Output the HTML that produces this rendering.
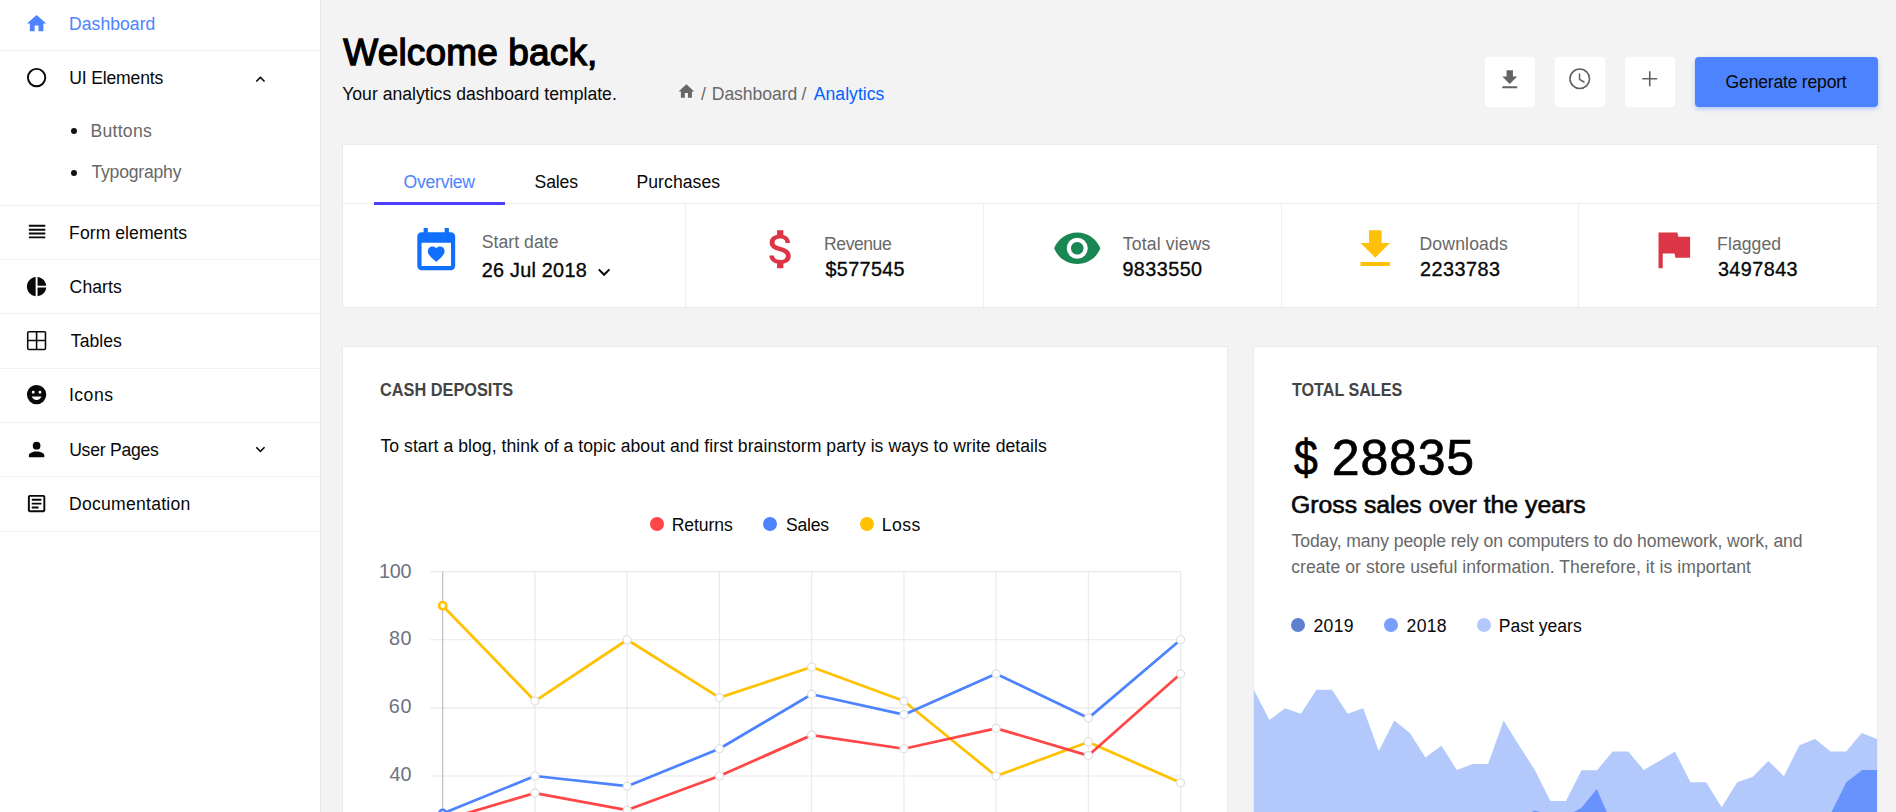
<!DOCTYPE html>
<html><head><meta charset="utf-8"><title>Dashboard</title>
<style>
html,body{margin:0;padding:0;}
body{width:1896px;height:812px;overflow:hidden;background:#f3f3f3;position:relative;font-family:"Liberation Sans",sans-serif;}
.t{position:absolute;white-space:nowrap;line-height:1;}
.i{position:absolute;display:block;overflow:hidden;}
.b{position:absolute;}
</style></head><body>
<div class="b" style="left:0px;top:0px;width:320px;height:812px;background:#fff;"></div>
<div class="b" style="left:320px;top:0px;width:1px;height:812px;background:#e5e5e5;"></div>
<div class="b" style="left:0px;top:50px;width:320px;height:1px;background:#f2f2f2;"></div>
<div class="b" style="left:0px;top:205px;width:320px;height:1px;background:#f2f2f2;"></div>
<div class="b" style="left:0px;top:259px;width:320px;height:1px;background:#f2f2f2;"></div>
<div class="b" style="left:0px;top:313px;width:320px;height:1px;background:#f2f2f2;"></div>
<div class="b" style="left:0px;top:368px;width:320px;height:1px;background:#f2f2f2;"></div>
<div class="b" style="left:0px;top:422px;width:320px;height:1px;background:#f2f2f2;"></div>
<div class="b" style="left:0px;top:476px;width:320px;height:1px;background:#f2f2f2;"></div>
<div class="b" style="left:0px;top:531px;width:320px;height:1px;background:#f2f2f2;"></div>
<div class="t" style="left:69.09px;top:16.07px;font-size:17.6px;color:#4d83ff;letter-spacing:0.023px;">Dashboard</div>
<svg class="i" style="left:25.00px;top:11.80px;width:23.2px;height:23.2px" viewBox="0 0 24 24"><path fill="#4d83ff" d="M10,20V14H14V20H19V12H22L12,3L2,12H5V20H10Z"/></svg>
<div class="t" style="left:69.18px;top:70.07px;font-size:17.6px;color:#080808;letter-spacing:-0.170px;">UI Elements</div>
<svg class="i" style="left:25.00px;top:65.80px;width:23.2px;height:23.2px" viewBox="0 0 24 24"><path fill="#080808" d="M12,20A8,8 0 0,1 4,12A8,8 0 0,1 12,4A8,8 0 0,1 20,12A8,8 0 0,1 12,20M12,2A10,10 0 0,0 2,12A10,10 0 0,0 12,22A10,10 0 0,0 22,12A10,10 0 0,0 12,2Z"/></svg>
<div class="t" style="left:69.09px;top:225.07px;font-size:17.6px;color:#080808;letter-spacing:0.053px;">Form elements</div>
<svg class="i" style="left:25.00px;top:219.90px;width:23.2px;height:23.2px" viewBox="0 0 24 24"><path fill="#080808" d="M4,5V7H21V5M4,11H21V9H4M4,19H21V17H4M4,15H21V13H4V15Z"/></svg>
<div class="t" style="left:69.62px;top:279.07px;font-size:17.6px;color:#080808;letter-spacing:0.073px;">Charts</div>
<svg class="i" style="left:25.00px;top:274.80px;width:23.2px;height:23.2px" viewBox="0 0 24 24"><path fill="#080808" d="M11,2V22C5.9,21.5 2,17.2 2,12C2,6.8 5.9,2.5 11,2M13,2V11H22C21.5,6.2 17.8,2.5 13,2M13,13V22C17.7,21.5 21.5,17.8 22,13H13Z"/></svg>
<div class="t" style="left:70.85px;top:333.07px;font-size:17.6px;color:#080808;letter-spacing:0.021px;">Tables</div>
<svg class="i" style="left:25.00px;top:328.80px;width:23.2px;height:23.2px" viewBox="0 0 24 24"><path fill="#080808" d="M4,2H20A2,2 0 0,1 22,4V20A2,2 0 0,1 20,22H4C2.92,22 2,21.1 2,20V4A2,2 0 0,1 4,2M3.6,3.6V11.2H11.2V3.6H3.6M3.6,20.4H11.2V12.8H3.6V20.4M20.4,20.4V12.8H12.8V20.4H20.4M20.4,3.6H12.8V11.2H20.4V3.6Z"/></svg>
<div class="t" style="left:68.92px;top:387.07px;font-size:17.6px;color:#080808;letter-spacing:0.509px;">Icons</div>
<svg class="i" style="left:25.00px;top:382.80px;width:23.2px;height:23.2px" viewBox="0 0 24 24"><path fill="#080808" d="M12,2C6.47,2 2,6.5 2,12A10,10 0 0,0 12,22A10,10 0 0,0 22,12A10,10 0 0,0 12,2M15.5,8A1.5,1.5 0 0,1 17,9.5A1.5,1.5 0 0,1 15.5,11A1.5,1.5 0 0,1 14,9.5A1.5,1.5 0 0,1 15.5,8M8.5,8A1.5,1.5 0 0,1 10,9.5A1.5,1.5 0 0,1 8.5,11A1.5,1.5 0 0,1 7,9.5A1.5,1.5 0 0,1 8.5,8M12,17.5C9.67,17.5 7.69,16.04 6.89,14H17.11C16.3,16.04 14.33,17.5 12,17.5Z"/></svg>
<div class="t" style="left:69.18px;top:442.07px;font-size:17.6px;color:#080808;letter-spacing:-0.258px;">User Pages</div>
<svg class="i" style="left:25.00px;top:437.80px;width:23.2px;height:23.2px" viewBox="0 0 24 24"><path fill="#080808" d="M12,4A4,4 0 0,1 16,8A4,4 0 0,1 12,12A4,4 0 0,1 8,8A4,4 0 0,1 12,4M12,14C16.42,14 20,15.79 20,18V20H4V18C4,15.79 7.58,14 12,14Z"/></svg>
<div class="t" style="left:69.09px;top:496.07px;font-size:17.6px;color:#080808;letter-spacing:0.241px;">Documentation</div>
<svg class="i" style="left:25.00px;top:491.80px;width:23.2px;height:23.2px" viewBox="0 0 24 24"><path fill="#080808" d="M5,3C3.89,3 3,3.89 3,5V19C3,20.11 3.89,21 5,21H19C20.11,21 21,20.11 21,19V5C21,3.89 20.11,3 19,3H5M5,5H19V19H5V5M7,7V9H17V7H7M7,11V13H17V11H7M7,15V17H14V15H7Z"/></svg>
<div class="t" style="left:90.39px;top:123.07px;font-size:17.6px;color:#686868;letter-spacing:0.293px;">Buttons</div>
<div class="t" style="left:91.45px;top:164.07px;font-size:17.6px;color:#686868;letter-spacing:-0.212px;">Typography</div>
<div class="b" style="left:70.6px;top:128.0px;width:6.4px;height:6.4px;background:#111;border-radius:50%;"></div>
<div class="b" style="left:70.6px;top:169.6px;width:6.4px;height:6.4px;background:#111;border-radius:50%;"></div>
<svg class="i" style="left:250.95px;top:70.00px;width:18.8px;height:18.8px" viewBox="0 0 24 24"><path fill="#080808" d="M7.41,15.41L12,10.83L16.59,15.41L18,14L12,8L6,14L7.41,15.41Z"/></svg>
<svg class="i" style="left:250.95px;top:439.70px;width:18.8px;height:18.8px" viewBox="0 0 24 24"><path fill="#080808" d="M7.41,8.58L12,13.17L16.59,8.58L18,10L12,16L6,10L7.41,8.58Z"/></svg>
<div class="t" style="left:343.36px;top:34.06px;font-size:37px;color:#000;letter-spacing:0.148px;-webkit-text-stroke:1.3px #000;">Welcome back,</div>
<div class="t" style="left:342.16px;top:86.07px;font-size:17.6px;color:#080808;letter-spacing:0.013px;">Your analytics dashboard template.</div>
<svg class="i" style="left:677.10px;top:81.70px;width:18.8px;height:18.8px" viewBox="0 0 24 24"><path fill="#666" d="M10,20V14H14V20H19V12H22L12,3L2,12H5V20H10Z"/></svg>
<div class="t" style="left:701.10px;top:86.07px;font-size:17.6px;color:#686868;">/</div>
<div class="t" style="left:711.79px;top:86.07px;font-size:17.6px;color:#686868;letter-spacing:-0.077px;">Dashboard</div>
<div class="t" style="left:801.50px;top:86.07px;font-size:17.6px;color:#686868;">/</div>
<div class="t" style="left:813.80px;top:86.07px;font-size:17.6px;color:#0062ff;letter-spacing:0.027px;">Analytics</div>
<div class="b" style="left:1485px;top:57px;width:50px;height:50px;background:#fff;border-radius:4px;box-shadow:0 0 2px rgba(255,255,255,.6);"></div>
<div class="b" style="left:1555px;top:57px;width:50px;height:50px;background:#fff;border-radius:4px;box-shadow:0 0 2px rgba(255,255,255,.6);"></div>
<div class="b" style="left:1625px;top:57px;width:50px;height:50px;background:#fff;border-radius:4px;box-shadow:0 0 2px rgba(255,255,255,.6);"></div>
<svg class="i" style="left:1497.25px;top:66.65px;width:25.5px;height:25.5px" viewBox="0 0 24 24"><path fill="#636363" d="M5,20H19V18H5M19,9H15V3H9V9H5L12,16L19,9Z"/></svg>
<svg class="i" style="left:1567.05px;top:66.35px;width:25.5px;height:25.5px" viewBox="0 0 24 24"><circle cx="12" cy="12" r="9.2" fill="none" stroke="#606060" stroke-width="1.5"/><path d="M11.8,7V12.6L16.4,15.3" fill="none" stroke="#606060" stroke-width="1.4"/></svg>
<svg class="i" style="left:1637.15px;top:66.35px;width:25.5px;height:25.5px" viewBox="0 0 24 24"><path d="M5,12H19M12,5V19" fill="none" stroke="#606060" stroke-width="1.5"/></svg>
<div class="b" style="left:1695px;top:57px;width:183px;height:50px;background:#4d83ff;border-radius:4px;box-shadow:0 2px 4px rgba(77,131,255,.4);"></div>
<div class="t" style="left:1725.62px;top:74.07px;font-size:17.6px;color:#080808;letter-spacing:-0.221px;">Generate report</div>
<div class="b" style="left:342px;top:144px;width:1536px;height:164px;background:#fff;border:1px solid #e8eaed;box-sizing:border-box;"></div>
<div class="b" style="left:343px;top:203px;width:1534px;height:1px;background:#efefef;"></div>
<div class="b" style="left:374px;top:202px;width:131px;height:3px;background:#4e3efc;"></div>
<div class="t" style="left:403.61px;top:174.07px;font-size:17.6px;color:#4d83ff;letter-spacing:-0.271px;">Overview</div>
<div class="t" style="left:534.61px;top:174.07px;font-size:17.6px;color:#080808;letter-spacing:-0.173px;">Sales</div>
<div class="t" style="left:636.49px;top:174.07px;font-size:17.6px;color:#080808;letter-spacing:0.058px;">Purchases</div>
<div class="b" style="left:685px;top:204px;width:1px;height:103px;background:#efefef;"></div>
<div class="b" style="left:983px;top:204px;width:1px;height:103px;background:#efefef;"></div>
<div class="b" style="left:1281px;top:204px;width:1px;height:103px;background:#efefef;"></div>
<div class="b" style="left:1578px;top:204px;width:1px;height:103px;background:#efefef;"></div>
<svg class="i" style="left:411.35px;top:225.75px;width:50.5px;height:50.5px" viewBox="0 0 24 24"><path fill="#1070fd" d="M19,19H5V8H19M16,1V3H8V1H6V3H5C3.89,3 3,3.89 3,5V19A2,2 0 0,0 5,21H19A2,2 0 0,0 21,19V5C21,3.89 20.1,3 19,3H18V1M12,17.1L11.4,16.56C9.35,14.7 8,13.48 8,11.98C8,10.76 8.96,9.8 10.18,9.8C10.87,9.8 11.53,10.12 12,10.63C12.43,10.12 13.09,9.8 13.78,9.8C15,9.8 15.96,10.76 15.96,11.98C15.96,13.48 14.61,14.7 12.56,16.56L12,17.1Z"/></svg>
<div class="t" style="left:481.81px;top:234.07px;font-size:17.6px;color:#686868;letter-spacing:0.043px;">Start date</div>
<div class="t" style="left:481.79px;top:261.06px;font-size:19.8px;color:#080808;letter-spacing:0.257px;-webkit-text-stroke:0.35px #080808;">26 Jul 2018</div>
<svg class="i" style="left:591.90px;top:260.40px;width:24.2px;height:24.2px" viewBox="0 0 24 24"><path fill="#080808" d="M7.41,8.58L12,13.17L16.59,8.58L18,10L12,16L6,10L7.41,8.58Z"/></svg>
<svg class="i" style="left:755.75px;top:223.75px;width:50.5px;height:50.5px" viewBox="0 0 24 24"><path fill="#dc3545" d="M11.8,10.9C9.53,10.31 8.8,9.7 8.8,8.75C8.8,7.66 9.81,6.9 11.5,6.9C13.28,6.9 13.94,7.75 14,9H16.21C16.14,7.28 15.09,5.7 13,5.19V3H10V5.16C8.06,5.58 6.5,6.84 6.5,8.77C6.5,11.08 8.41,12.23 11.2,12.9C13.7,13.5 14.2,14.38 14.2,15.31C14.2,16 13.71,17.1 11.5,17.1C9.44,17.1 8.63,16.18 8.5,15H6.32C6.44,17.19 8.08,18.42 10,18.83V21H13V18.85C14.95,18.5 16.5,17.35 16.5,15.3C16.5,12.46 14.07,11.5 11.8,10.9Z"/></svg>
<div class="t" style="left:824.09px;top:236.07px;font-size:17.6px;color:#686868;letter-spacing:-0.467px;">Revenue</div>
<div class="t" style="left:825.48px;top:260.06px;font-size:19.8px;color:#080808;letter-spacing:0.353px;-webkit-text-stroke:0.35px #080808;">$577545</div>
<svg class="i" style="left:1052.25px;top:223.25px;width:50.5px;height:50.5px" viewBox="0 0 24 24"><path fill="#198754" d="M12,9A3,3 0 0,0 9,12A3,3 0 0,0 12,15A3,3 0 0,0 15,12A3,3 0 0,0 12,9M12,17A5,5 0 0,1 7,12A5,5 0 0,1 12,7A5,5 0 0,1 17,12A5,5 0 0,1 12,17M12,4.5C7,4.5 2.73,7.61 1,12C2.73,16.39 7,19.5 12,19.5C17,19.5 21.27,16.39 23,12C21.27,7.61 17,4.5 12,4.5Z"/></svg>
<div class="t" style="left:1122.75px;top:236.07px;font-size:17.6px;color:#686868;letter-spacing:0.160px;">Total views</div>
<div class="t" style="left:1122.38px;top:260.06px;font-size:19.8px;color:#080808;letter-spacing:0.452px;-webkit-text-stroke:0.35px #080808;">9833550</div>
<svg class="i" style="left:1349.95px;top:223.75px;width:50.5px;height:50.5px" viewBox="0 0 24 24"><path fill="#ffc107" d="M5,20H19V18H5M19,9H15V3H9V9H5L12,16L19,9Z"/></svg>
<div class="t" style="left:1419.49px;top:236.07px;font-size:17.6px;color:#686868;letter-spacing:0.161px;">Downloads</div>
<div class="t" style="left:1420.09px;top:260.06px;font-size:19.8px;color:#080808;letter-spacing:0.485px;-webkit-text-stroke:0.35px #080808;">2233783</div>
<svg class="i" style="left:1648.05px;top:224.25px;width:50.5px;height:50.5px" viewBox="0 0 24 24"><path fill="#dc3545" d="M14.4,6L14,4H5V21H7V14H12.6L13,16H20V6H14.4Z"/></svg>
<div class="t" style="left:1717.09px;top:236.07px;font-size:17.6px;color:#686868;letter-spacing:0.071px;">Flagged</div>
<div class="t" style="left:1717.88px;top:260.06px;font-size:19.8px;color:#080808;letter-spacing:0.452px;-webkit-text-stroke:0.35px #080808;">3497843</div>
<div class="b" style="left:342px;top:346px;width:886px;height:480px;background:#fff;border:1px solid #e8eaed;box-sizing:border-box;"></div>
<div class="t" style="left:380.35px;top:382.07px;font-size:17.6px;color:#444;font-weight:700;transform:scaleX(0.9271);transform-origin:0 0;">CASH DEPOSITS</div>
<div class="t" style="left:380.45px;top:438.07px;font-size:17.6px;color:#080808;letter-spacing:0.048px;">To start a blog, think of a topic about and first brainstorm party is ways to write details</div>
<div class="b" style="left:649.8px;top:516.9px;width:14.2px;height:14.2px;background:#ff4747;border-radius:50%;"></div>
<div class="t" style="left:671.79px;top:517.07px;font-size:17.6px;color:#080808;letter-spacing:-0.113px;">Returns</div>
<div class="b" style="left:763.3px;top:516.9px;width:14.2px;height:14.2px;background:#4d83ff;border-radius:50%;"></div>
<div class="t" style="left:786.11px;top:517.07px;font-size:17.6px;color:#080808;letter-spacing:-0.298px;">Sales</div>
<div class="b" style="left:859.8px;top:516.9px;width:14.2px;height:14.2px;background:#ffc100;border-radius:50%;"></div>
<div class="t" style="left:881.69px;top:517.07px;font-size:17.6px;color:#080808;letter-spacing:0.496px;">Loss</div>
<svg class="i" style="left:342px;top:346px;width:886px;height:466px" viewBox="342 346 886 466"><line x1="430.3" x2="1181" y1="571.60" y2="571.60" stroke="#e9e9e9" stroke-width="1.1"/><line x1="430.3" x2="1181" y1="639.73" y2="639.73" stroke="#e9e9e9" stroke-width="1.1"/><line x1="430.3" x2="1181" y1="707.87" y2="707.87" stroke="#e9e9e9" stroke-width="1.1"/><line x1="430.3" x2="1181" y1="776.00" y2="776.00" stroke="#e9e9e9" stroke-width="1.1"/><line x1="442.70" x2="442.70" y1="571.60" y2="813" stroke="#b9b9b9" stroke-width="1.1"/><line x1="534.94" x2="534.94" y1="571.60" y2="813" stroke="#e9e9e9" stroke-width="1.1"/><line x1="627.17" x2="627.17" y1="571.60" y2="813" stroke="#e9e9e9" stroke-width="1.1"/><line x1="719.41" x2="719.41" y1="571.60" y2="813" stroke="#e9e9e9" stroke-width="1.1"/><line x1="811.65" x2="811.65" y1="571.60" y2="813" stroke="#e9e9e9" stroke-width="1.1"/><line x1="903.89" x2="903.89" y1="571.60" y2="813" stroke="#e9e9e9" stroke-width="1.1"/><line x1="996.12" x2="996.12" y1="571.60" y2="813" stroke="#e9e9e9" stroke-width="1.1"/><line x1="1088.36" x2="1088.36" y1="571.60" y2="813" stroke="#e9e9e9" stroke-width="1.1"/><line x1="1180.60" x2="1180.60" y1="571.60" y2="813" stroke="#e9e9e9" stroke-width="1.1"/><polyline points="442.70,605.67 534.94,701.05 627.17,639.73 719.41,697.65 811.65,666.99 903.89,701.05 996.12,776.00 1088.36,741.93 1180.60,782.82" fill="none" stroke="#ffc100" stroke-width="2.75" stroke-linejoin="round"/><circle cx="442.70" cy="605.67" r="3.6" fill="#fff" stroke="#ffc100" stroke-width="2.6"/><circle cx="534.94" cy="701.05" r="4" fill="#fff" stroke="#dcdfe2" stroke-width="1.2"/><circle cx="627.17" cy="639.73" r="4" fill="#fff" stroke="#dcdfe2" stroke-width="1.2"/><circle cx="719.41" cy="697.65" r="4" fill="#fff" stroke="#dcdfe2" stroke-width="1.2"/><circle cx="811.65" cy="666.99" r="4" fill="#fff" stroke="#dcdfe2" stroke-width="1.2"/><circle cx="903.89" cy="701.05" r="4" fill="#fff" stroke="#dcdfe2" stroke-width="1.2"/><circle cx="996.12" cy="776.00" r="4" fill="#fff" stroke="#dcdfe2" stroke-width="1.2"/><circle cx="1088.36" cy="741.93" r="4" fill="#fff" stroke="#dcdfe2" stroke-width="1.2"/><circle cx="1180.60" cy="782.82" r="4" fill="#fff" stroke="#dcdfe2" stroke-width="1.2"/><polyline points="442.70,813.48 534.94,776.00 627.17,786.22 719.41,748.75 811.65,694.24 903.89,714.68 996.12,673.80 1088.36,718.09 1180.60,639.73" fill="none" stroke="#4d83ff" stroke-width="2.75" stroke-linejoin="round"/><circle cx="442.70" cy="813.48" r="3.6" fill="#fff" stroke="#4d83ff" stroke-width="2.6"/><circle cx="534.94" cy="776.00" r="4" fill="#fff" stroke="#dcdfe2" stroke-width="1.2"/><circle cx="627.17" cy="786.22" r="4" fill="#fff" stroke="#dcdfe2" stroke-width="1.2"/><circle cx="719.41" cy="748.75" r="4" fill="#fff" stroke="#dcdfe2" stroke-width="1.2"/><circle cx="811.65" cy="694.24" r="4" fill="#fff" stroke="#dcdfe2" stroke-width="1.2"/><circle cx="903.89" cy="714.68" r="4" fill="#fff" stroke="#dcdfe2" stroke-width="1.2"/><circle cx="996.12" cy="673.80" r="4" fill="#fff" stroke="#dcdfe2" stroke-width="1.2"/><circle cx="1088.36" cy="718.09" r="4" fill="#fff" stroke="#dcdfe2" stroke-width="1.2"/><circle cx="1180.60" cy="639.73" r="4" fill="#fff" stroke="#dcdfe2" stroke-width="1.2"/><polyline points="442.70,820.29 534.94,793.04 627.17,810.07 719.41,776.00 811.65,735.12 903.89,748.75 996.12,728.31 1088.36,755.56 1180.60,673.80" fill="none" stroke="#ff4747" stroke-width="2.75" stroke-linejoin="round"/><circle cx="442.70" cy="820.29" r="3.6" fill="#fff" stroke="#ff4747" stroke-width="2.6"/><circle cx="534.94" cy="793.04" r="4" fill="#fff" stroke="#dcdfe2" stroke-width="1.2"/><circle cx="627.17" cy="810.07" r="4" fill="#fff" stroke="#dcdfe2" stroke-width="1.2"/><circle cx="719.41" cy="776.00" r="4" fill="#fff" stroke="#dcdfe2" stroke-width="1.2"/><circle cx="811.65" cy="735.12" r="4" fill="#fff" stroke="#dcdfe2" stroke-width="1.2"/><circle cx="903.89" cy="748.75" r="4" fill="#fff" stroke="#dcdfe2" stroke-width="1.2"/><circle cx="996.12" cy="728.31" r="4" fill="#fff" stroke="#dcdfe2" stroke-width="1.2"/><circle cx="1088.36" cy="755.56" r="4" fill="#fff" stroke="#dcdfe2" stroke-width="1.2"/><circle cx="1180.60" cy="673.80" r="4" fill="#fff" stroke="#dcdfe2" stroke-width="1.2"/></svg>
<div class="t" style="left:379.01px;top:562.06px;font-size:19.8px;color:#6c7383;letter-spacing:-0.295px;">100</div>
<div class="t" style="left:388.91px;top:629.06px;font-size:19.8px;color:#6c7383;letter-spacing:0.506px;">80</div>
<div class="t" style="left:388.81px;top:697.06px;font-size:19.8px;color:#6c7383;letter-spacing:0.605px;">60</div>
<div class="t" style="left:389.40px;top:765.06px;font-size:19.8px;color:#6c7383;letter-spacing:0.011px;">40</div>
<div class="b" style="left:1253px;top:346px;width:625px;height:480px;background:#fff;border:1px solid #e8eaed;box-sizing:border-box;"></div>
<div class="t" style="left:1291.64px;top:382.07px;font-size:17.6px;color:#444;font-weight:700;transform:scaleX(0.9161);transform-origin:0 0;">TOTAL SALES</div>
<div class="t" style="left:1293.82px;top:433.05px;font-size:50px;color:#000;-webkit-text-stroke:0.7px #000;transform:scaleX(0.8566);transform-origin:0 0;">$</div>
<div class="t" style="left:1331.85px;top:433.05px;font-size:50px;color:#000;letter-spacing:0.800px;-webkit-text-stroke:0.7px #000;">28835</div>
<div class="t" style="left:1290.96px;top:494.06px;font-size:23px;color:#080808;-webkit-text-stroke:0.6px #080808;transform:scaleX(1.0768);transform-origin:0 0;">Gross sales over the years</div>
<div class="t" style="left:1291.55px;top:533.07px;font-size:17.6px;color:#686868;letter-spacing:-0.098px;">Today, many people rely on computers to do homework, work, and</div>
<div class="t" style="left:1291.20px;top:559.07px;font-size:17.6px;color:#686868;letter-spacing:0.040px;">create or store useful information. Therefore, it is important</div>
<div class="b" style="left:1290.9px;top:617.8px;width:14.2px;height:14.2px;background:#5e80d0;border-radius:50%;"></div>
<div class="t" style="left:1313.52px;top:618.07px;font-size:17.6px;color:#080808;letter-spacing:0.304px;">2019</div>
<div class="b" style="left:1383.9px;top:617.8px;width:14.2px;height:14.2px;background:#76a0fc;border-radius:50%;"></div>
<div class="t" style="left:1406.62px;top:618.07px;font-size:17.6px;color:#080808;letter-spacing:0.275px;">2018</div>
<div class="b" style="left:1477.0px;top:617.8px;width:14.2px;height:14.2px;background:#b3c9fc;border-radius:50%;"></div>
<div class="t" style="left:1498.79px;top:618.07px;font-size:17.6px;color:#080808;letter-spacing:-0.015px;">Past years</div>
<svg class="i" style="left:1254px;top:600px;width:623px;height:212px" viewBox="1254 600 623 212"><polygon points="1253.84,689.65 1269.41,720.09 1284.98,708.33 1300.90,713.87 1316.47,689.65 1332.04,689.65 1347.61,713.87 1363.17,708.33 1378.74,750.89 1394.31,720.44 1409.88,732.90 1425.45,757.46 1441.37,745.70 1456.94,769.92 1472.51,764.04 1488.08,764.04 1503.65,720.44 1519.22,745.70 1534.79,769.92 1550.36,801.06 1565.93,801.06 1581.50,770.26 1597.07,770.26 1612.64,751.58 1628.21,751.58 1643.78,769.92 1659.35,760.92 1674.92,751.58 1690.49,782.37 1706.06,782.37 1721.63,807.29 1737.20,782.37 1752.77,776.84 1768.34,760.92 1783.91,776.15 1799.48,745.35 1815.05,739.12 1830.62,751.58 1846.19,751.58 1861.76,732.90 1877.33,739.12 1877.33,832.20 1253.84,832.20" fill="#b3c9fc"/><polygon points="1565.60,816.70 1581.50,807.70 1596.80,789.00 1612.40,825.00" fill="#6892fc"/><polygon points="1530.50,813.00 1534.40,810.40 1550.00,814.50" fill="#6892fc"/><polygon points="1830.60,813.80 1846.40,782.30 1862.20,769.90 1877.30,769.90 1877.30,813.80" fill="#6892fc"/></svg>
</body></html>
